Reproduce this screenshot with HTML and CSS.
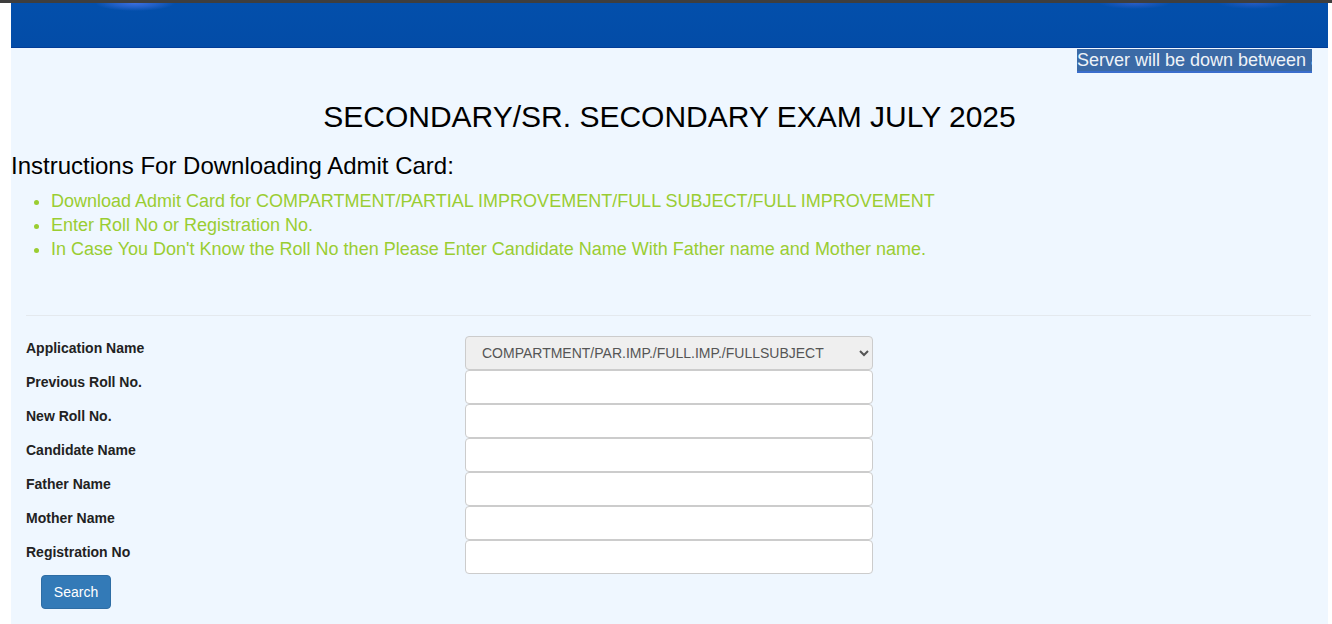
FILE: index.html
```html
<!DOCTYPE html>
<html lang="en">
<head>
<meta charset="utf-8">
<title>Admit Card</title>
<link rel="stylesheet" href="styles.css">
</head>
<body>
<div class="topbar"></div>
<div class="page">
  <header class="banner"></header>
  <div class="notice-row">
    <div class="marquee">Server will be down between a</div>
  </div>
  <h2 class="title">SECONDARY/SR. SECONDARY EXAM JULY 2025</h2>
  <h3 class="instr-title">Instructions For Downloading Admit Card:</h3>
  <ul class="instr">
    <li>Download Admit Card for COMPARTMENT/PARTIAL IMPROVEMENT/FULL SUBJECT/FULL IMPROVEMENT</li>
    <li>Enter Roll No or Registration No.</li>
    <li>In Case You Don't Know the Roll No then Please Enter Candidate Name With Father name and Mother name.</li>
  </ul>
  <div class="form-wrap">
    <hr class="sep">
    <form class="admit-form">
      <div class="row">
        <label class="lbl">Application Name</label>
        <select class="ctrl sel">
          <option>COMPARTMENT/PAR.IMP./FULL.IMP./FULLSUBJECT</option>
        </select>
      </div>
      <div class="row"><label class="lbl">Previous Roll No.</label><input class="ctrl" type="text"></div>
      <div class="row"><label class="lbl">New Roll No.</label><input class="ctrl" type="text"></div>
      <div class="row"><label class="lbl">Candidate Name</label><input class="ctrl" type="text"></div>
      <div class="row"><label class="lbl">Father Name</label><input class="ctrl" type="text"></div>
      <div class="row"><label class="lbl">Mother Name</label><input class="ctrl" type="text"></div>
      <div class="row"><label class="lbl">Registration No</label><input class="ctrl" type="text"></div>
      <div class="btn-row"><button type="button" class="btn">Search</button></div>
    </form>
  </div>
</div>
</body>
</html>
```
FILE: styles.css
```css
html, body {
  margin: 0;
  padding: 0;
  background: #ffffff;
  font-family: "Liberation Sans", Arial, sans-serif;
  color: #222;
}
.topbar {
  height: 3px;
  background: #3e3e3e;
}
.page {
  margin-left: 11px;
  width: 1317px;
  background: #eff7ff;
  min-height: 621px;
  overflow: hidden;
}
.banner {
  height: 44px;
  border-bottom: 1px solid #023d98;
  background:
    radial-gradient(ellipse 40px 8px at 124px 0px, #3d6fe0 0%, rgba(61,111,224,0.5) 55%, rgba(61,111,224,0) 100%),
    radial-gradient(ellipse 36px 6px at 1124px 0px, rgba(60,100,210,0.7) 0%, rgba(60,100,210,0) 100%),
    radial-gradient(ellipse 36px 6px at 1243px 0px, rgba(60,100,210,0.6) 0%, rgba(60,100,210,0) 100%),
    linear-gradient(#034fab, #034ca7);
}
.notice-row {
  display: flex;
  justify-content: flex-end;
  padding-top: 1px;
  height: 25px;
}
.marquee {
  width: 235px;
  height: 22px;
  margin-right: 16px;
  background: #3b6aa6;
  border-bottom: 2px solid #3a6dcc;
  color: #eef3f8;
  font-size: 18px;
  line-height: 23px;
  white-space: nowrap;
  overflow: hidden;
}
.title {
  margin: 26px 0 0;
  font-size: 30px;
  line-height: 33px;
  font-weight: normal;
  text-align: center;
  color: #000;
}
.instr-title {
  margin: 20px 0 10px;
  font-size: 24px;
  line-height: 26px;
  font-weight: normal;
  color: #000;
}
.instr {
  margin: 0;
  padding-left: 40px;
  font-size: 18px;
  line-height: 24px;
  color: #9acd32;
}
.form-wrap {
  padding: 0 15px;
}
.sep {
  margin: 54px 2px 20px 0;
  border: 0;
  border-top: 1px solid #e4e9ee;
  height: 0;
}
.admit-form {
  display: flex;
  flex-direction: column;
}
.row {
  display: flex;
  height: 34px;
}
.lbl {
  width: 439px;
  padding-top: 2px;
  font-size: 14px;
  line-height: 20px;
  font-weight: bold;
  color: #222;
}
.ctrl {
  width: 408px;
  height: 34px;
  box-sizing: border-box;
  border: 1px solid #cccccc;
  border-radius: 4px;
  background: #ffffff;
  margin: 0;
  font-family: "Liberation Sans", Arial, sans-serif;
  font-size: 14px;
  color: #555;
}
.sel {
  background: #efefef;
  padding: 0 8px 0 12px;
}
.btn-row {
  padding: 1px 0 0 15px;
}
.btn {
  width: 70px;
  height: 34px;
  background: #337ab7;
  border: 1px solid #2e6da4;
  border-radius: 4px;
  color: #ffffff;
  font-family: "Liberation Sans", Arial, sans-serif;
  font-size: 14px;
  padding: 0;
}
```
